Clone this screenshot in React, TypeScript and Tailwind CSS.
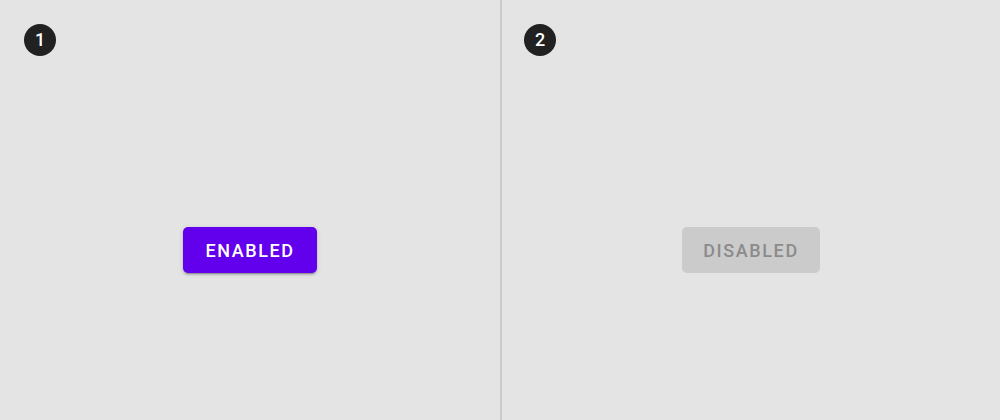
import React from "react";

function Badge({ n }: { n: string }) {
  return (
    <div className="w-8 h-8 rounded-full bg-[#212121] text-white flex items-center justify-center text-[18px] font-medium leading-none">
      {n}
    </div>
  );
}

export default function App() {
  return (
    <div className="w-[1000px] h-[420px] bg-[#e4e4e4] flex font-['Roboto',sans-serif]">
      <div className="w-[500px] h-full flex flex-col">
        <div className="h-20 pt-6 pl-6">
          <Badge n="1" />
        </div>
        <div className="flex-1 flex items-center justify-center">
          <button className="h-[46px] px-[22px] rounded-[5px] bg-[#6200ee] text-white text-[18px] font-medium tracking-[1.6px] uppercase shadow-[0_3px_1px_-2px_rgba(0,0,0,0.2),0_2px_2px_0_rgba(0,0,0,0.14),0_1px_5px_0_rgba(0,0,0,0.12)]">
            ENABLED
          </button>
        </div>
      </div>
      <div className="w-[2px] h-full bg-[#cbcbcb]" />
      <div className="flex-1 h-full flex flex-col">
        <div className="h-20 pt-6 pl-[22px]">
          <Badge n="2" />
        </div>
        <div className="flex-1 flex items-center justify-center">
          <button disabled className="h-[46px] px-[21px] rounded-[5px] bg-[#cbcbcb] text-[#8b8b8b] text-[18px] font-medium tracking-[1.6px] uppercase">
            DISABLED
          </button>
        </div>
      </div>
    </div>
  );
}
